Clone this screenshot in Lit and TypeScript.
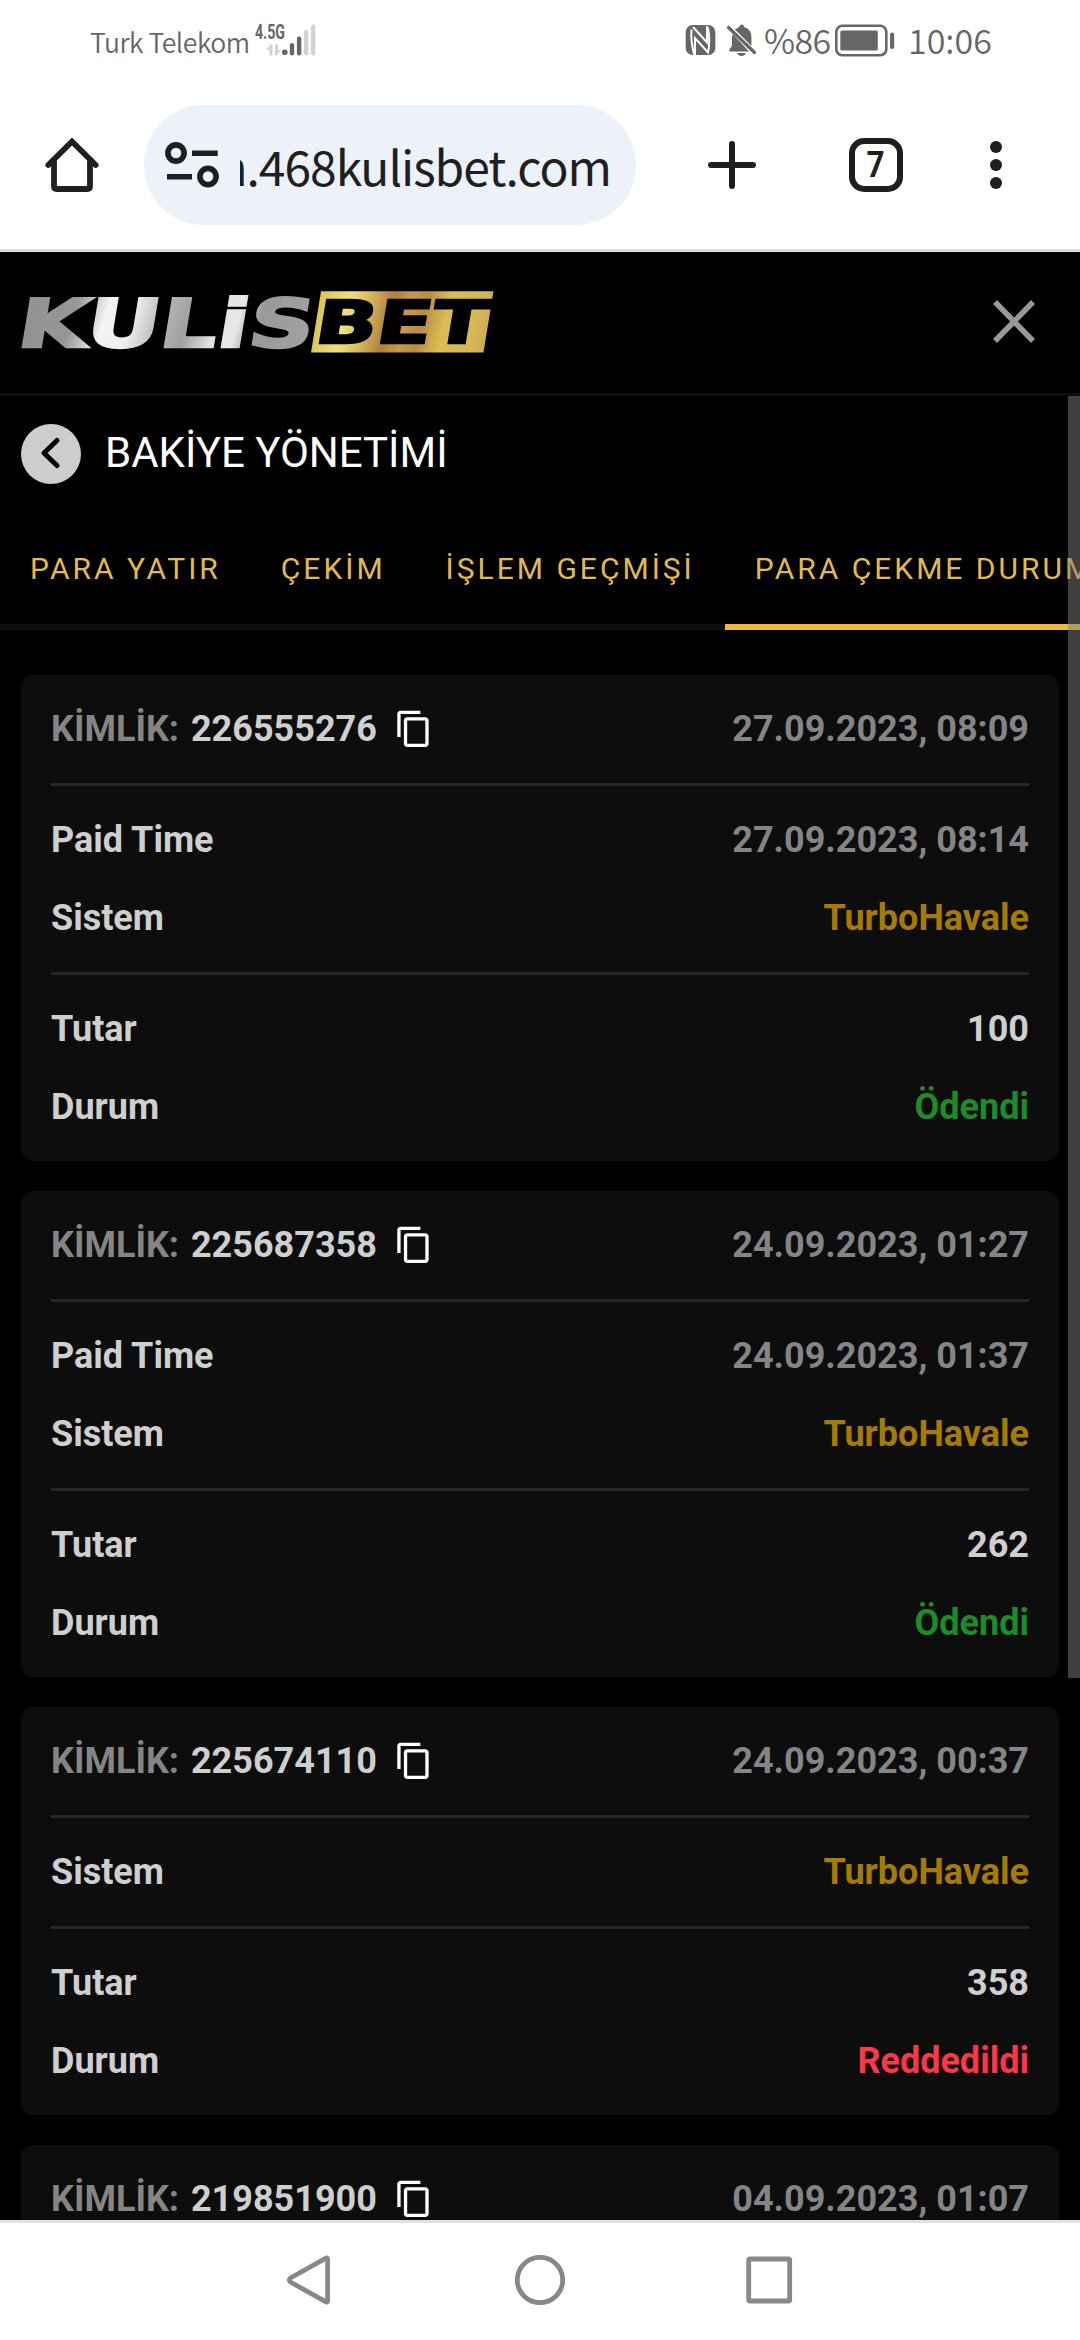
import { LitElement, html, css, svg } from "lit";
import { customElement, property } from "lit/decorators.js";
import { classMap } from "lit/directives/class-map.js";

interface Row {
  label: string;
  value: string;
  tone: "muted" | "gold" | "plain" | "green" | "red";
}

interface Entry {
  id: string;
  date: string;
  groups: Row[][];
}

const system: Row = { label: "Sistem", value: "TurboHavale", tone: "gold" };
const paid = (value: string): Row => ({ label: "Paid Time", value, tone: "muted" });
const amount = (value: string): Row => ({ label: "Tutar", value, tone: "plain" });
const done: Row = { label: "Durum", value: "Ödendi", tone: "green" };
const rejected: Row = { label: "Durum", value: "Reddedildi", tone: "red" };

const ENTRIES: Entry[] = [
  { id: "226555276", date: "27.09.2023, 08:09", groups: [[paid("27.09.2023, 08:14"), system], [amount("100"), done]] },
  { id: "225687358", date: "24.09.2023, 01:27", groups: [[paid("24.09.2023, 01:37"), system], [amount("262"), done]] },
  { id: "225674110", date: "24.09.2023, 00:37", groups: [[system], [amount("358"), rejected]] },
  { id: "219851900", date: "04.09.2023, 01:07", groups: [] },
];

@customElement("status-bar")
class StatusBar extends LitElement {
  static styles = css`
    :host { display: flex; justify-content: space-between; height: 84px; padding: 0 88px 0 90px; color: #666;
      font-family: "Noto Sans CJK SC", sans-serif; box-sizing: border-box; flex: none; }
    .side { display: flex; align-items: center; height: 84px; }
    svg { display: block; flex: none; }
    .carrier { font-size: 26.5px; line-height: 84px; font-weight: 350; white-space: nowrap; width: 165px; letter-spacing: -0.450px; }
    .pct { font-size: 34px; line-height: 80px; height: 84px; font-weight: 350; margin-left: 7px; width: 71px; letter-spacing: -0.6px; white-space: nowrap; }
    .time { font-size: 34px; line-height: 80px; height: 84px; font-weight: 350; margin-left: 13px; width: 84px; white-space: nowrap; }
    .net { font: 700 20px Roboto, sans-serif; }
  `;
  render() {
    return html`
      <div class="side">
        <span class="carrier">Turk Telekom</span>
        <svg width="62" height="84" viewBox="255 0 62 84" fill="#666">
          <text class="net" x="255" y="38.5" textLength="30" lengthAdjust="spacingAndGlyphs">4.5G</text>
          <g fill="#d2d2d2">
            <path d="M265.5 50l5-5.5h2v11h-3v-6zM275 44.500h3v5.500h3l-4.500 5.500h-1.500z" />
            <rect x="304" y="30" width="4.400" height="25.500" rx="2.200" />
            <rect x="311" y="24.500" width="4.400" height="31" rx="2.200" />
          </g>
          <circle cx="284.800" cy="52.300" r="2.800" />
          <rect x="289.800" y="43" width="4.400" height="12.500" rx="2.200" />
          <rect x="296.900" y="36.500" width="4.400" height="19" rx="2.200" />
        </svg>
      </div>
      <div class="side">
        <svg width="72" height="84" viewBox="685 0 72 84">
          <rect x="685.700" y="25" width="29.600" height="30" rx="7" fill="#666" />
          <path d="M691.500 29.500q-1 10 2.500 25M693 27l14 15.500V26M708 27.500q2.500 14 0 25L695 38v17" fill="none" stroke="#fff" stroke-width="2" />
          <path d="M729.500 51.500V49q2.500-2 2.500-5V37l.800-3L749 51.500zM735 29.500q2.300-2 4-2.300.500-2.700 2.700-2.700t2.700 2.700q7 2 7 9.800V46zM737 53h9q-1.500 3-4.500 3t-4.500-3z" fill="#666" />
          <path d="M728.500 27.500l26 25" stroke="#666" stroke-width="3.200" stroke-linecap="round" />
        </svg>
        <span class="pct">%86</span>
        <svg width="60" height="84" viewBox="835 0 60 84">
          <rect x="836.300" y="25.800" width="50" height="29.500" rx="6" fill="none" stroke="#666" stroke-width="2.600" />
          <rect x="840.300" y="30.500" width="37.500" height="20" rx="1.500" fill="#666" />
          <rect x="890" y="32.500" width="4.200" height="16.500" rx="2.100" fill="#666" />
        </svg>
        <span class="time">10:06</span>
      </div>
    `;
  }
}

@customElement("browser-bar")
class BrowserBar extends LitElement {
  static styles = css`
    :host { display: flex; align-items: center; height: 168px; padding: 0 78px 3px 45px; border-bottom: 3px solid #dcdddf;
      box-sizing: border-box; flex: none; color: #1f1f1f; }
    svg { display: block; flex: none; }
    .pill { display: flex; align-items: center; width: 492px; height: 120px; box-sizing: border-box; border-radius: 60px;
      background: #ecf1fa; padding: 0 24px 0 21px; margin-left: 45px; }
    .url { display: flex; justify-content: flex-end; width: 371px; margin-left: 20px; overflow: hidden; white-space: nowrap;
      font: 400 48px/120px "Noto Sans CJK SC", sans-serif; letter-spacing: -1.050px; }
    .plus { margin-left: 72px; }
    .count { display: flex; align-items: center; justify-content: center; width: 54px; height: 54px; box-sizing: border-box;
      border: 6px solid #1f1f1f; border-radius: 15px; margin-left: 93px; font: 700 37px/42px Roboto, sans-serif; }
    .digit { transform: scaleX(0.85); }
    .more { margin-left: 87px; }
  `;
  render() {
    return html`
      <svg width="54" height="56" viewBox="45 137 54 56" fill="none" stroke="#1f1f1f" stroke-width="5.800" stroke-linecap="round" stroke-linejoin="round">
        <path d="M54 162v24.500q0 2.500 2.500 2.500h31q2.500 0 2.500-2.500V162" />
        <path d="M48.300 165L72 141.500 95.700 165" stroke-linejoin="miter" />
      </svg>
      <div class="pill">
        <svg width="55" height="48" viewBox="165 141 55 48" fill="none" stroke="#1f1f1f" stroke-width="5.600">
          <circle cx="176" cy="153" r="8.100" /><circle cx="208" cy="176.500" r="8.100" />
          <path d="M192 153.200h25.700M167 176.700h25" />
        </svg>
        <div class="url"><span>m.468kulisbet.com</span></div>
      </div>
      <svg class="plus" width="48" height="48" viewBox="0 0 48 48" stroke="#1f1f1f" stroke-width="6" stroke-linecap="round"><path d="M3 24h42M24 3v42" /></svg>
      <div class="count"><span class="digit">7</span></div>
      <svg class="more" width="12" height="48" viewBox="0 0 12 48" fill="#1f1f1f"><circle cx="6" cy="6" r="6" /><circle cx="6" cy="24" r="6" /><circle cx="6" cy="42" r="6" /></svg>
    `;
  }
}

@customElement("site-header")
class SiteHeader extends LitElement {
  static styles = css`
    :host { display: flex; align-items: center; justify-content: space-between; height: 144px; padding: 0 45px 2px 21px;
      border-bottom: 3px solid #0e0e0e; box-sizing: border-box; flex: none; }
    svg { display: block; flex: none; }
    .word { font: 700 67px "DejaVu Sans", sans-serif; }
    .bet { font: 700 59px "DejaVu Sans", sans-serif; }
  `;
  render() {
    return html`
      <svg width="474" height="64" viewBox="21 289 474 64">
        <defs>
          <linearGradient id="silver" gradientUnits="userSpaceOnUse" x1="20" y1="-50" x2="312" y2="-10">
            <stop offset="0" stop-color="#929292" /><stop offset=".17" stop-color="#969696" />
            <stop offset=".28" stop-color="#f4f4f4" /><stop offset=".37" stop-color="#eee" />
            <stop offset=".47" stop-color="#b8b8b8" /><stop offset=".56" stop-color="#a0a0a0" />
            <stop offset=".66" stop-color="#e2e2e2" /><stop offset=".73" stop-color="#e8e8e8" />
            <stop offset=".8" stop-color="#999" /><stop offset="1" stop-color="#a2a2a2" />
          </linearGradient>
          <linearGradient id="gold" gradientUnits="userSpaceOnUse" x1="311" y1="300" x2="493" y2="345">
            <stop offset="0" stop-color="#d9bb4f" /><stop offset=".2" stop-color="#efe07c" />
            <stop offset=".3" stop-color="#d9bb5c" /><stop offset=".42" stop-color="#b08040" />
            <stop offset=".52" stop-color="#c79a45" /><stop offset=".6" stop-color="#b98b42" />
            <stop offset=".72" stop-color="#d8be52" /><stop offset=".88" stop-color="#d6b957" />
            <stop offset="1" stop-color="#c9a055" />
          </linearGradient>
        </defs>
        <text class="word" transform="translate(0 345.500) skewX(-9.500)" x="15" y="0" fill="url(#silver)" stroke="url(#silver)" stroke-width="2.400" textLength="296" lengthAdjust="spacingAndGlyphs">KULiS</text>
        <path d="M321 290.300H493.500L483.500 351.500H311z" fill="url(#gold)" />
        <text class="bet" transform="translate(0 341.500) skewX(-9.500)" x="313" y="0" fill="#000" stroke="#000" stroke-width="2.400" textLength="171" lengthAdjust="spacingAndGlyphs">BET</text>
      </svg>
      <svg width="42" height="43" viewBox="0 0 42 43" stroke="#999" stroke-width="5.600"><path d="M2 2l38 39M40 2L2 41" /></svg>
    `;
  }
}

@customElement("entry-card")
class EntryCard extends LitElement {
  @property({ attribute: false }) entry!: Entry;
  static styles = css`
    :host { display: block; flex: none; background: #0d0d0d; border-radius: 12px; padding: 0 30px; font: 700 36px/78px Roboto, sans-serif; color: #cfcfcf; }
    .group { padding: 15px 0; border-top: 3px solid #262626; }
    .group.first { border-top: 0; }
    .row { display: flex; justify-content: space-between; height: 78px; white-space: nowrap; }
    .ident { display: flex; align-items: center; }
    .copy { display: block; margin-left: 17px; }
    .num { margin-left: 12px; }
    .muted { color: #858585; }
    .gold { color: #a67c00; }
    .green { color: #1c8c27; }
    .red { color: #ff3548; }
  `;
  render() {
    const e = this.entry;
    return html`
      <div class="group first">
        <div class="row">
          <span class="ident"><span class="muted">KİMLİK:</span><span class="num">${e.id}</span>
            <svg class="copy" width="39.600" height="39.600" viewBox="0 0 24 24" fill="#fff"><path d="M16 1H4c-1.100 0-2 .9-2 2v14h2V3h12V1zm3 4H8c-1.100 0-2 .9-2 2v14c0 1.100.9 2 2 2h11c1.100 0 2-.9 2-2V7c0-1.100-.9-2-2-2zm0 16H8V7h11v14z" /></svg>
          </span>
          <span class="muted">${e.date}</span>
        </div>
      </div>
      ${e.groups.map(
        (g) => html`<div class="group">
          ${g.map((r) => html`<div class="row"><span>${r.label}</span><span class=${r.tone}>${r.value}</span></div>`)}
        </div>`
      )}
    `;
  }
}

@customElement("nav-bar")
class NavBar extends LitElement {
  static styles = css`
    :host { display: flex; justify-content: center; align-items: center; gap: 181px; height: 120px; box-sizing: border-box; padding: 0 0 3px;
      border-top: 3px solid #e2e2e2; background: #fff; flex: none; }
    svg { display: block; }
  `;
  render() {
    const icon = (shape: unknown) => html`<svg width="50" height="50" viewBox="0 0 50 50" fill="none" stroke="#888" stroke-width="4.800" stroke-linejoin="round">${shape}</svg>`;
    return html`
      ${icon(svg`<path d="M41.500 3.300Q43.600 2 43.600 4.500V45.500Q43.600 48 41.500 46.700L6.500 27Q4 25 6.500 23z" />`)}
      ${icon(svg`<circle cx="25" cy="25" r="22.700" />`)}
      ${icon(svg`<rect x="2.700" y="4" width="41" height="42" rx="1.500" />`)}
    `;
  }
}

@customElement("app-root")
class AppRoot extends LitElement {
  static styles = css`
    :host { display: flex; flex-direction: column; width: 1080px; height: 2340px; background: #fff; overflow: hidden; }
    .site { display: flex; flex-direction: column; flex: 1; min-height: 0; background: #000; }
    .body { position: relative; flex: 1; min-height: 0; overflow: hidden; display: flex; flex-direction: column; }
    .title { display: flex; align-items: center; gap: 24px; height: 116px; padding: 0 21px; flex: none; color: #fff;
      font: 400 42px/60px Roboto, sans-serif; }
    .back { display: block; }
    .label { padding-bottom: 3px; }
    .tabs { display: flex; flex: none; height: 118px; margin-bottom: 45px; overflow: hidden; box-shadow: inset 0 -6px #0d0d0d;
      font: 400 30px/113px Roboto, sans-serif; letter-spacing: 3px; color: #e3ba4e; }
    .tab { flex: none; padding: 0 30px; box-sizing: border-box; white-space: nowrap; }
    .tab.active { border-bottom: 6px solid #ebb93f; }
    .list { display: flex; flex-direction: column; gap: 30px; padding: 0 21px; }
    .thumb { position: absolute; right: 0; top: 0; width: 12px; height: 1282px; background: rgba(128, 128, 128, 0.5); }
  `;
  render() {
    const tabs = ["PARA YATIR", "ÇEKİM", "İŞLEM GEÇMİŞİ", "PARA ÇEKME DURUMU"];
    return html`
      <status-bar></status-bar>
      <browser-bar></browser-bar>
      <main class="site">
        <site-header></site-header>
        <div class="body">
          <div class="title">
            <svg class="back" width="60" height="60" viewBox="0 0 60 60"><circle cx="30" cy="30" r="30" fill="#cdcdcd" /><path d="M36 16.500L23 29l13 12.500" fill="none" stroke="#000" stroke-width="5" stroke-linecap="round" stroke-linejoin="round" /></svg>
            <span class="label">BAKİYE YÖNETİMİ</span>
          </div>
          <nav class="tabs">${tabs.map((t, i) => html`<span class=${classMap({ tab: true, active: i === 3 })}>${t}</span>`)}</nav>
          <div class="list">${ENTRIES.map((e) => html`<entry-card .entry=${e}></entry-card>`)}</div>
          <div class="thumb"></div>
        </div>
      </main>
      <nav-bar></nav-bar>
    `;
  }
}
